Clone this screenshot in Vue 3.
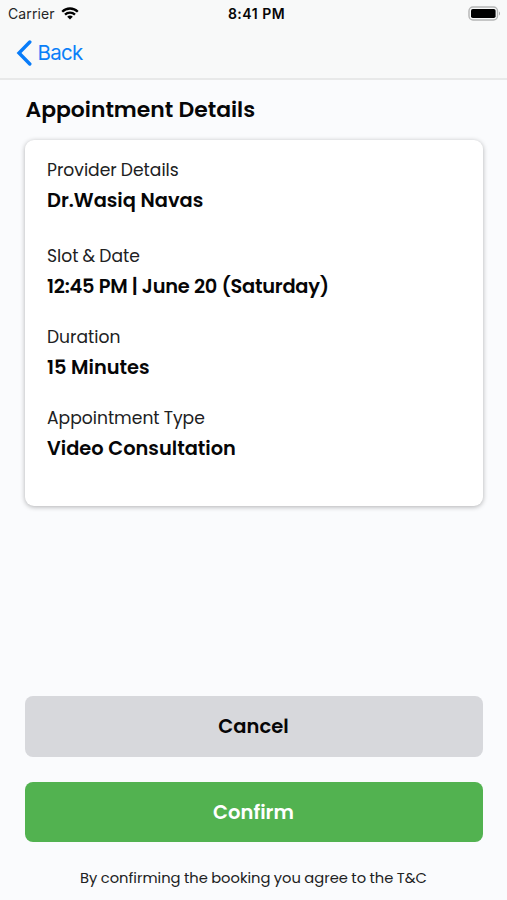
<script setup>
const details = [
  { label: 'Provider Details', value: 'Dr.Wasiq Navas', key: 'provider' },
  { label: 'Slot & Date', value: '12:45 PM | June 20 (Saturday)', key: 'slot' },
  { label: 'Duration', value: '15 Minutes', key: 'duration' },
  { label: 'Appointment Type', value: 'Video Consultation', key: 'type' },
]
</script>

<template>
  <div class="screen">
    <header class="header">
      <div class="status">
        <div class="carrier">
          <span class="carrier-name">Carrier</span>
          <svg class="wifi" width="18" height="13" viewBox="0 0 18 13" fill="none" stroke="#000" stroke-width="2.3">
            <path d="M1.2 4.7C5.5.4 12.5.4 16.8 4.7" />
            <path d="M4 7.6C6.8 4.9 11.2 4.9 14 7.6" />
            <path d="M9 12.5 6.2 9.7C7.8 8.2 10.2 8.2 11.8 9.7Z" fill="#000" stroke="none" />
          </svg>
        </div>
        <span class="time">8:41 PM</span>
        <svg class="battery" width="33" height="15" viewBox="0 0 33 15">
          <rect x="1" y="1" width="28.5" height="13" rx="4" fill="none" stroke="#b4b5b5" stroke-width="1.4" />
          <rect x="3" y="3" width="24.6" height="9" rx="1.8" fill="#000" />
          <path d="M31 5.5c1.3.5 1.3 3.5 0 4Z" fill="#a5a6a6" />
        </svg>
      </div>
      <nav class="nav">
        <svg width="16" height="26" viewBox="0 0 16 26" fill="none" stroke="#087cf9" stroke-width="3.4" stroke-linecap="round" stroke-linejoin="miter">
          <path d="M13.8 2 3 13l10.8 11" />
        </svg>
        <span class="back">Back</span>
      </nav>
    </header>
    <main class="content">
      <h1>Appointment Details</h1>
      <section class="card">
        <div v-for="d in details" :key="d.key" class="item" :class="d.key">
          <div class="label">{{ d.label }}</div>
          <div class="value">{{ d.value }}</div>
        </div>
      </section>
      <div class="actions">
        <button class="cancel" type="button">Cancel</button>
        <button class="confirm" type="button">Confirm</button>
      </div>
      <p class="terms">By confirming the booking you agree to the T&amp;C</p>
    </main>
  </div>
</template>

<style>
body { background: #fafbfd; }
</style>

<style scoped>
.screen {
  box-sizing: border-box;
  width: 507px;
  height: 900px;
  overflow: hidden;
  display: flex;
  flex-direction: column;
  background: #fafbfd;
  color: #060607;
  font-family: Poppins, Inter, sans-serif;
}
.header {
  box-sizing: border-box;
  height: 80px;
  background: #f8f9f9;
  border-bottom: 2px solid #e8e9e9;
  font-family: Inter, sans-serif;
}
.status {
  height: 27px;
  padding: 0 6px 0 8px;
  display: grid;
  grid-template-columns: 1fr auto 1fr;
  align-items: center;
}
.carrier { display: flex; align-items: center; gap: 6.5px; }
.carrier-name { font-size: 14px; letter-spacing: 0.12px; color: #252627; }
.time { font-size: 14px; font-weight: 600; letter-spacing: 0.5px; padding-left: 4px; }
.battery { justify-self: end; }
.nav {
  height: 51px;
  padding-left: 16px;
  display: flex;
  align-items: center;
  gap: 5.5px;
  color: #0a7ff8;
}
.back { font-size: 20.5px; letter-spacing: -0.75px; }
.content {
  flex: 1;
  padding: 0 24.5px;
  display: flex;
  flex-direction: column;
}
h1 {
  margin: 0;
  padding-left: 1px;
  height: 59.5px;
  line-height: 59px;
  font-size: 21.9px;
  font-weight: 600;
}
.card {
  box-sizing: border-box;
  height: 366.5px;
  padding: 18px 22.5px;
  border-radius: 9px;
  background: #fff;
  box-shadow: 0 1px 5px rgba(0, 0, 0, .3);
}
.item { padding-bottom: 23px; }
.item.provider { padding-bottom: 28px; }
.label {
  height: 28px;
  line-height: 24px;
  font-size: 17.15px;
  word-spacing: -0.5px;
  color: #202122;
  white-space: nowrap;
}
.value {
  height: 30px;
  line-height: 30px;
  font-size: 19.4px;
  font-weight: 600;
  white-space: nowrap;
}
.slot .value { letter-spacing: -0.25px; }
.actions { margin-top: 190px; display: flex; flex-direction: column; gap: 25px; }
button {
  height: 60.5px;
  padding: 1px 0 0;
  border: 0;
  border-radius: 8px;
  font: 600 19.5px/59px Poppins, Inter, sans-serif;
}
.cancel { background: #d7d8dc; color: #060607; }
.confirm { background: #52b250; color: #fff; }
.terms {
  margin: 23px 0 0;
  text-align: center;
  font-size: 14.7px;
  line-height: 26px;
  word-spacing: -0.5px;
  color: #202122;
  white-space: nowrap;
}
</style>
